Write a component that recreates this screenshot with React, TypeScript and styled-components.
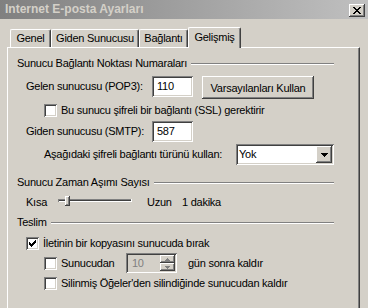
import React from "react";
import styled, { createGlobalStyle } from "styled-components";

const GlobalStyle = createGlobalStyle`
  html, body { margin: 0; padding: 0; background: #d4d0c8; }
  body {
    width: 368px; height: 308px; overflow: hidden;
    font-family: "Liberation Sans", Arial, sans-serif;
    font-size: 11px; color: #000;
    letter-spacing: -0.25px;
  }
  * { box-sizing: border-box; }
`;

const Window = styled.div`
  width: 368px;
  height: 308px;
  display: flex;
  flex-direction: column;
  overflow: hidden;
  background: #d4d0c8;
`;

const TitleBar = styled.div`
  height: 19px;
  flex: none;
  display: flex;
  justify-content: space-between;
  align-items: flex-start;
  background: linear-gradient(to right, #808080, #c0c0c0);
`;

const TitleText = styled.div`
  padding-left: 5px;
  line-height: 19px;
  font-weight: bold;
  font-size: 12px;
  letter-spacing: 0;
  color: #d4d0c8;
`;

const raised = `
  box-shadow: inset -1px -1px #404040, inset 1px 1px #ffffff,
    inset -2px -2px #808080, inset 2px 2px #d4d0c8;
`;

const sunken = `
  box-shadow: inset 1px 1px #808080, inset -1px -1px #ffffff,
    inset 2px 2px #404040, inset -2px -2px #d4d0c8;
`;

const CloseButton = styled.div`
  width: 16px;
  height: 13px;
  margin: 4px 3px 0 0;
  background: #d4d0c8;
  ${raised}
  display: flex;
  align-items: center;
  justify-content: center;
`;

const TabStrip = styled.div`
  flex: none;
  height: 20px;
  margin-top: 8px;
  padding-left: 10px;
  display: flex;
  align-items: flex-end;
`;

const Tab = styled.div<{ $w: number; $active?: boolean }>`
  position: relative;
  z-index: ${(p) => (p.$active ? 1 : 0)};
  width: ${(p) => p.$w}px;
  height: ${(p) => (p.$active ? 21 : 18)}px;
  margin-bottom: ${(p) => (p.$active ? -1 : 0)}px;
  background: #d4d0c8;
  border-top: 1px solid #ffffff;
  border-left: 1px solid #ffffff;
  border-right: 1px solid #404040;
  border-radius: 2px 2px 0 0;
  box-shadow: inset -1px 0 #808080;
  display: flex;
  align-items: flex-start;
  justify-content: center;
  padding-top: ${(p) => (p.$active ? 3 : 2)}px;
  line-height: 13px;
`;

const Panel = styled.div`
  flex: 1;
  margin-left: 7px;
  width: 353px;
  border-top: 1px solid #ffffff;
  border-left: 1px solid #ffffff;
  border-right: 1px solid #404040;
  box-shadow: inset -1px 0 #808080;
  padding: 9px 25px 0 9px;
  display: flex;
  flex-direction: column;
`;

const GroupHeader = styled.div<{ $mt: number }>`
  margin-top: ${(p) => p.$mt}px;
  height: 13px;
  line-height: 13px;
  display: flex;
  align-items: center;
  gap: 4px;
  white-space: nowrap;
`;

const Etch = styled.div`
  flex: 1;
  height: 2px;
  border-top: 1px solid #808080;
  border-bottom: 1px solid #ffffff;
`;

const Row = styled.div<{ $mt: number; $indent: number; $h: number; $center?: boolean }>`
  margin-top: ${(p) => p.$mt}px;
  margin-left: ${(p) => p.$indent}px;
  height: ${(p) => p.$h}px;
  display: flex;
  align-items: ${(p) => (p.$center ? "center" : "flex-start")};
  white-space: nowrap;
`;

const Label = styled.div<{ $w?: number; $h?: number; $ml?: number }>`
  ${(p) => (p.$w ? `width: ${p.$w}px; flex: none;` : "")}
  margin-left: ${(p) => p.$ml ?? 0}px;
  line-height: ${(p) => p.$h ?? 13}px;
  height: ${(p) => p.$h ?? 13}px;
`;

const TextBox = styled.div<{ $w: number }>`
  width: ${(p) => p.$w}px;
  height: 21px;
  flex: none;
  background: #ffffff;
  ${sunken}
  padding-left: 5px;
  line-height: 21px;
`;

const PushButton = styled.div<{ $w: number; $ml: number }>`
  width: ${(p) => p.$w}px;
  margin-left: ${(p) => p.$ml}px;
  height: 23px;
  flex: none;
  background: #d4d0c8;
  ${raised}
  display: flex;
  align-items: center;
  justify-content: center;
`;

const CheckBox = styled.div`
  width: 13px;
  height: 13px;
  flex: none;
  background: #ffffff;
  ${sunken}
  margin-right: 4px;
  display: flex;
  align-items: center;
  justify-content: center;
`;

const Select = styled.div<{ $w: number }>`
  width: ${(p) => p.$w}px;
  height: 21px;
  flex: none;
  background: #ffffff;
  ${sunken}
  padding: 2px;
  display: flex;
  align-items: stretch;
`;

const SelectValue = styled.div`
  flex: 1;
  padding-left: 1px;
  line-height: 17px;
`;

const DropButton = styled.div`
  width: 16px;
  background: #d4d0c8;
  ${raised}
  display: flex;
  align-items: center;
  justify-content: center;
`;

const SliderBox = styled.div`
  width: 74px;
  height: 16px;
  flex: none;
  display: flex;
  align-items: center;
`;

const Spinner = styled.div`
  width: 51px;
  height: 20px;
  flex: none;
  background: #d4d0c8;
  ${sunken}
  padding: 2px;
  display: flex;
`;

const SpinValue = styled.div`
  flex: 1;
  color: #808080;
  padding-left: 4px;
  line-height: 16px;
`;

const SpinButtons = styled.div`
  width: 15px;
  display: flex;
  flex-direction: column;
`;

const SpinButton = styled.div`
  flex: 1;
  background: #d4d0c8;
  ${raised}
  display: flex;
  align-items: center;
  justify-content: center;
`;

const Check = () => (
  <svg width="7" height="7" viewBox="0 0 7 7" shapeRendering="crispEdges">
    <path
      d="M6 0h1v3h-1v1h-1v1h-1v1h-1v1h-1v-1h-1v-1h-1v-3h1v1h1v1h1v-1h1v-1h1z"
      fill="#000"
    />
  </svg>
);

const CloseGlyph = () => (
  <svg width="8" height="7" viewBox="0 0 8 7" shapeRendering="crispEdges">
    <path
      d="M0 0h2v1h1v1h2v-1h1v-1h2v1h-1v1h-1v1h-1v1h1v1h1v1h1v1h-2v-1h-1v-1h-2v1h-1v1h-2v-1h1v-1h1v-1h1v-1h-1v-1h-1v-1h-1z"
      fill="#000"
    />
  </svg>
);

const DownTriangle = () => (
  <svg width="7" height="4" viewBox="0 0 7 4" shapeRendering="crispEdges">
    <path d="M0 0h7v1h-1v1h-1v1h-1v1h-1v-1h-1v-1h-1v-1h-1z" fill="#000" />
  </svg>
);

const SpinArrow = ({ up }: { up?: boolean }) => (
  <svg width="5" height="3" viewBox="0 0 5 3" shapeRendering="crispEdges">
    <path
      d={up ? "M2 0h1v1h1v1h1v1h-5v-1h1v-1h1z" : "M0 0h5v1h-1v1h-1v1h-1v-1h-1v-1h-1z"}
      fill="#808080"
    />
  </svg>
);

const Slider = () => (
  <svg width="74" height="16" viewBox="0 0 74 16" shapeRendering="crispEdges">
    <rect x="0" y="5" width="74" height="1" fill="#808080" />
    <rect x="1" y="6" width="72" height="1" fill="#404040" />
    <rect x="0" y="7" width="74" height="1" fill="#ffffff" />
    <rect x="0" y="5" width="1" height="3" fill="#808080" />
    <rect x="73" y="5" width="1" height="3" fill="#ffffff" />
    <rect x="7" y="2" width="5" height="9" fill="#d4d0c8" />
    <rect x="7" y="2" width="5" height="1" fill="#ffffff" />
    <rect x="7" y="2" width="1" height="9" fill="#ffffff" />
    <rect x="11" y="2" width="1" height="10" fill="#404040" />
    <rect x="10" y="3" width="1" height="8" fill="#808080" />
    <rect x="7" y="11" width="5" height="1" fill="#404040" />
    <rect x="8" y="10" width="3" height="1" fill="#808080" />
  </svg>
);

export default function App() {
  return (
    <Window>
      <GlobalStyle />
      <TitleBar>
        <TitleText>Internet E-posta Ayarları</TitleText>
        <CloseButton>
          <CloseGlyph />
        </CloseButton>
      </TitleBar>
      <TabStrip>
        <Tab $w={41}>Genel</Tab>
        <Tab $w={88}>Giden Sunucusu</Tab>
        <Tab $w={49}>Bağlantı</Tab>
        <Tab $w={53} $active>
          Gelişmiş
        </Tab>
      </TabStrip>
      <Panel>
        <GroupHeader $mt={0}>
          Sunucu Bağlantı Noktası Numaraları
          <Etch />
        </GroupHeader>
        <Row $mt={6} $indent={9} $h={23}>
          <Label $w={126} $h={21}>
            Gelen sunucusu (POP3):
          </Label>
          <TextBox $w={41}>110</TextBox>
          <PushButton $w={112} $ml={9}>
            Varsayılanları Kullan
          </PushButton>
        </Row>
        <Row $mt={5} $indent={27} $h={13}>
          <CheckBox />
          <Label>Bu sunucu şifreli bir bağlantı (SSL) gerektirir</Label>
        </Row>
        <Row $mt={4} $indent={9} $h={21}>
          <Label $w={126} $h={21}>
            Giden sunucusu (SMTP):
          </Label>
          <TextBox $w={41}>587</TextBox>
        </Row>
        <Row $mt={2} $indent={27} $h={21}>
          <Label $w={192} $h={21}>
            Aşağıdaki şifreli bağlantı türünü kullan:
          </Label>
          <Select $w={98}>
            <SelectValue>Yok</SelectValue>
            <DropButton>
              <DownTriangle />
            </DropButton>
          </Select>
        </Row>
        <GroupHeader $mt={11}>
          Sunucu Zaman Aşımı Sayısı
          <Etch />
        </GroupHeader>
        <Row $mt={5} $indent={9} $h={16} $center>
          <Label $w={32}>Kısa</Label>
          <SliderBox>
            <Slider />
          </SliderBox>
          <Label $w={35} $ml={15}>
            Uzun
          </Label>
          <Label>1 dakika</Label>
        </Row>
        <GroupHeader $mt={6}>
          Teslim
          <Etch />
        </GroupHeader>
        <Row $mt={8} $indent={9} $h={13}>
          <CheckBox>
            <Check />
          </CheckBox>
          <Label>İletinin bir kopyasını sunucuda bırak</Label>
        </Row>
        <Row $mt={3} $indent={27} $h={20} $center>
          <CheckBox />
          <Label $w={65}>Sunucudan</Label>
          <Spinner>
            <SpinValue>10</SpinValue>
            <SpinButtons>
              <SpinButton>
                <SpinArrow up />
              </SpinButton>
              <SpinButton>
                <SpinArrow />
              </SpinButton>
            </SpinButtons>
          </Spinner>
          <Label $ml={11}>gün sonra kaldır</Label>
        </Row>
        <Row $mt={4} $indent={27} $h={13}>
          <CheckBox />
          <Label>Silinmiş Öğeler'den silindiğinde sunucudan kaldır</Label>
        </Row>
      </Panel>
    </Window>
  );
}
